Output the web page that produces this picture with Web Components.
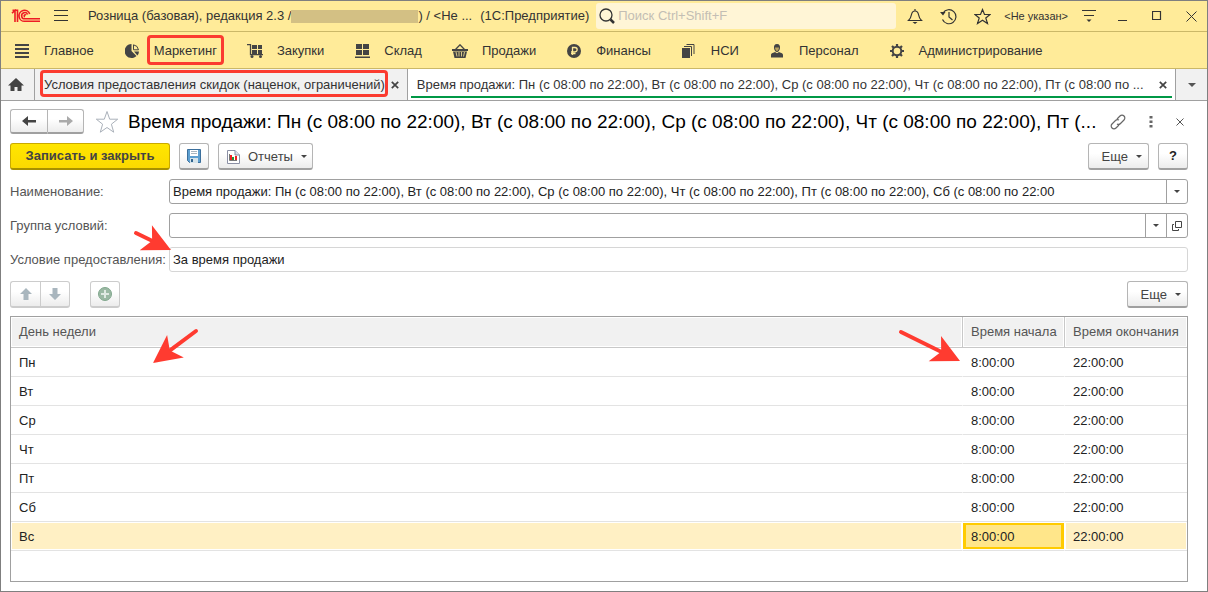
<!DOCTYPE html>
<html lang="ru">
<head>
<meta charset="utf-8">
<title>Розница (базовая), редакция 2.3</title>
<style>
  body {
    margin: 0;
    font: 13px/16px "Liberation Sans", Arial, sans-serif;
    color: #333;
  }
</style>
</head>
<body>
<app-window>
  <title-bar></title-bar>
  <section-nav>
    <nav-item icon="menu">Главное</nav-item>
    <nav-item icon="pie" marked>Маркетинг</nav-item>
    <nav-item icon="cart">Закупки</nav-item>
    <nav-item icon="stock">Склад</nav-item>
    <nav-item icon="basket">Продажи</nav-item>
    <nav-item icon="ruble">Финансы</nav-item>
    <nav-item icon="docs">НСИ</nav-item>
    <nav-item icon="person">Персонал</nav-item>
    <nav-item icon="gear">Администрирование</nav-item>
  </section-nav>
  <tab-strip>
    <tab-item marked>Условия предоставления скидок (наценок, ограничений)</tab-item>
    <tab-item active>Время продажи: Пн (с 08:00 по 22:00), Вт (с 08:00 по 22:00), Ср (с 08:00 по 22:00), Чт (с 08:00 по 22:00), Пт (с 08:00 по ...</tab-item>
  </tab-strip>
  <form-page>
    <form-header>Время продажи: Пн (с 08:00 по 22:00), Вт (с 08:00 по 22:00), Ср (с 08:00 по 22:00), Чт (с 08:00 по 22:00), Пт (...</form-header>
    <command-bar>
      <ui-button primary>Записать и закрыть</ui-button>
      <ui-button icon="save" label="Записать"></ui-button>
      <ui-button icon="report" menu>Отчеты</ui-button>
      <ui-button slot="end" wide menu>Еще</ui-button>
      <ui-button slot="end" help>?</ui-button>
    </command-bar>
    <form-field label="Наименование:" value="Время продажи: Пн (с 08:00 по 22:00), Вт (с 08:00 по 22:00), Ср (с 08:00 по 22:00), Чт (с 08:00 по 22:00), Пт (с 08:00 по 22:00), Сб (с 08:00 по 22:00" buttons="caret"></form-field>
    <form-field label="Группа условий:" value="" buttons="caret open"></form-field>
    <form-field label="Условие предоставления:" value="За время продажи" readonly>
      <red-arrow style="left: 122px; top: -18px" width="40" height="24" from="4 4" to="39 21"></red-arrow>
    </form-field>
    <command-bar>
      <button-pair icons="up down" labels="Вверх,Вниз" disabled></button-pair>
      <ui-button icon="plus" label="Добавить" disabled></ui-button>
      <ui-button slot="end" wide menu>Еще</ui-button>
    </command-bar>
    <schedule-table>
      <red-arrow style="left: 140px; top: 8px" width="50" height="42" from="45 6" to="2 38"></red-arrow>
      <red-arrow style="right: 226px; top: 10px" width="64" height="40" from="4 5" to="63 34"></red-arrow>
    </schedule-table>
  </form-page>
</app-window>

<script>
const ICONS = {
  logo: [30, 14, `<g fill="none" stroke="#ed1c24" stroke-width="1.6">
    <path d="M1 4.200 4 1.500V13M1.500 1.300H6.500V13"/>
    <path d="M18.700 5A5.500 5.500 0 1 0 14 12.300H29"/>
    <path d="M16.600 5.500A3.100 3.100 0 1 0 14 9.800H29"/>
    <path d="M15 6.200A1 1 0 1 0 14 7.800"/></g>`],
  burger: [16, 14, '<path d="M1 1.5h14M1 6.5h14M1 11.5h14" stroke="#333"/>'],
  search: [18, 18, '<circle cx="8" cy="8" r="6" fill="none" stroke="#333" stroke-width="1.3"/><path d="m12.5 12.5 3.5 3.5" stroke="#333" stroke-width="2.5"/>'],
  bell: [16, 17, '<path d="M1.500 12.500c2-2 2.500-3 3-6C5 4 6 3 8 3s3 1 3.500 3.500c.5 3 1 4 3 6ZM8 3V1" fill="none" stroke="#333" stroke-width="1.2"/><path d="M5.500 14h5L8 16Z" fill="#333"/>'],
  history: [17, 17, '<path d="M3 5A7 7 0 1 1 2.500 11.500" fill="none" stroke="#333" stroke-width="1.200"/><path d="M0 4h5.500L3 7.500Z" fill="#333"/><path d="M9 4v5l3.500 3" fill="none" stroke="#333" stroke-width="1.200"/>'],
  star: [17, 17, '<path d="m8.500 1.500 2 5h5.500l-4.200 3.500 1.700 5.500-5-3.200-5 3.200L5.200 10 1 6.500h5.500Z" fill="none" stroke="#333" stroke-width="1.200"/>'],
  bigstar: [24, 24, '<path d="m12 1.500 2.700 7.700h8l-6.300 5 2.300 8L12 17.500 5.300 22.200l2.300-8-6.300-5h8Z" fill="none" stroke="#aab1ba"/>'],
  filter: [14, 14, '<path d="M0 1.500h14M2 6.500h10" stroke="#333"/><path d="M4.500 10.500h5L7 13Z" fill="#333"/>'],
  min: [10, 10, '<path d="M0 9.500h9" stroke="#333"/>'],
  max: [10, 10, '<path d="M.5.5h8v8h-8Z" fill="none" stroke="#333" stroke-width="1.200"/>'],
  close: [11, 11, '<path d="m.5.5 10 10m0-10-10 10" stroke="#333"/>'],
  menu: [14, 14, '<path d="M0 1h14M0 5h14M0 9h14M0 13h14" stroke="#444" stroke-width="2"/>'],
  pie: [14, 14, '<path d="M6.500 0v7l5 5A7 7 0 1 1 6.500 0Z" fill="#444"/><path d="M8.500.8v5h5A6 6 0 0 0 8.500.8Z" fill="none" stroke="#444"/><path d="M9 7.500h5a7 7 0 0 1-1.600 4Z" fill="#444"/>'],
  cart: [16, 14, '<path d="M0 .7h3.500v10H16" fill="none" stroke="#444" stroke-width="1.300"/><path d="M5 1h5v4H5zM11 1h4v4h-4zM5 6h5v4H5zM11 6h4v4h-4z" fill="#444"/><circle cx="5" cy="12.500" r="1.500" fill="#444"/><circle cx="13.500" cy="12.500" r="1.500" fill="#444"/>'],
  stock: [15, 14, '<path d="M1 0h6v5H1zM8 0h6v5H8zM1 6h6v5H1zM8 6h6v5H8zM0 12.500h15V14H0z" fill="#444"/>'],
  basket: [16, 14, '<path d="M3.500 5.500 8 .8l4.500 4.700" fill="none" stroke="#444" stroke-width="1.300"/><path d="M0 5h16v2H0zM1 7.500h14L13.500 14h-11Z" fill="#444"/><path d="m4 8 1 4.500M7 8v4.500M9.500 8v4.500M12.500 8l-1 4.500" stroke="#ffeb99" stroke-width=".8"/>'],
  ruble: [14, 14, '<circle cx="7" cy="7" r="7" fill="#444"/><path d="M5.500 11V3.500H8a2 2 0 0 1 0 4.300H4M4 9.500h4.500" fill="none" stroke="#ffeb99" stroke-width="1.300"/>'],
  docs: [13, 14, '<path d="M0 4h8v10H0z" fill="#444"/><path d="M2 2.500h7.500V12M4.500.5H12V10" fill="none" stroke="#444"/>'],
  person: [14, 14, '<path d="M7 0C4.500 0 3.800 2 4 4s1.500 4 3 4 2.800-2 3-4-.5-4-3-4ZM1 13.500V11c0-2 3-2.500 4-3l2 1.200L9 8c1 .5 4 1 4 3v2.500Z" fill="#444"/><path d="M5 3.500h4C8.800 5.500 8 7 7 7S5.200 5.500 5 3.500Z" fill="#bba35d"/>'],
  gear: [16, 16, '<circle cx="8" cy="8" r="4.300" fill="none" stroke="#444" stroke-width="2"/><path d="M8 1v3M8 12v3M1 8h3M12 8h3M3 3l2 2M11 11l2 2M13 3l-2 2M5 11l-2 2" stroke="#444" stroke-width="2.200"/>'],
  home: [16, 14, '<path d="M8 0 16 7.500h-2.500V13H9.500V9h-3v4H2.500V7.500H0L8 0Z" fill="#444"/>'],
  cross: [8, 8, '<path d="m.8.8 6.400 6.400m0-6.400L.8 7.200" stroke="#444" stroke-width="1.700"/>'],
  left: [14, 12, '<path d="M0 6 6 1v4h8v2.500H6V11Z" fill="#444"/>'],
  right: [14, 12, '<path d="M14 6 8 1v4H0v2.500h8V11Z" fill="#aaa"/>'],
  link: [16, 16, '<g fill="none" stroke="#666" stroke-width="1.200"><path d="m7 5 3-3a2.800 2.800 0 0 1 4 4l-3.500 3.500a2.800 2.800 0 0 1-3.500.5"/><path d="m9 11-3 3a2.800 2.800 0 0 1-4-4l3.500-3.500A2.800 2.800 0 0 1 9 6"/></g>'],
  dots: [4, 12, '<path d="M.5 0h3v2.500h-3zM.5 4.500h3V7h-3zM.5 9h3v2.500h-3z" fill="#666"/>'],
  thincross: [8, 8, '<path d="m.5.5 7 7m0-7-7 7" stroke="#555"/>'],
  save: [14, 14, '<path d="M.5.5h13v13h-11l-2-2Z" fill="#5d9fd0" stroke="#3b6f9c"/><path d="M3 1h8v6H3z" fill="#fff"/><path d="M4 2.500h6M4 4.500h6" stroke="#a9b6c0"/><path d="M3 9h8v5H3z" fill="#d5e3ea"/><path d="M4 10h2v3H4z" fill="#31648f"/>'],
  report: [13, 14, '<path d="M.5.5H8L12.500 5v8.500H.5Z" fill="#fff" stroke="#8b90a5"/><path d="M8 .5V5h4.500" fill="#dde" stroke="#8b90a5"/><path d="M2.500 4v6.500H10" stroke="#777" fill="none"/><path d="M3 5h2v5H3z" fill="#e22"/><path d="M5 7h2v3H5z" fill="#1a9a3a"/><path d="M8 6h2v4H8z" fill="#e22"/>'],
  caret: [6, 3, '<path d="M0 0h6L3 3Z" fill="#444"/>'],
  bigcaret: [8, 4, '<path d="M0 0h8L4 4Z" fill="#555"/>'],
  open: [10, 10, '<path d="M3.500.5h6v6h-6ZM2 3.500H.5v6h6V8" fill="none" stroke="#444"/>'],
  up: [12, 12, '<path d="M6 0 12 6H8.500v6h-5V6H0Z" fill="#a9b6be"/>'],
  down: [12, 12, '<path d="M6 12 0 6h3.500V0h5v6H12Z" fill="#a9b6be"/>'],
  plus: [14, 14, '<circle cx="7" cy="7" r="6.500" fill="#9bb9a4" stroke="#81a78d"/><path d="M7 3v8M3 7h8" stroke="#dfe9e2" stroke-width="2"/>']
};

function icon(name) {
  const [w, h, body] = ICONS[name];
  return `<svg width="${w}" height="${h}" viewBox="0 0 ${w} ${h}" aria-hidden="true">${body}</svg>`;
}

const RESET = `
  * { box-sizing: border-box; }
  svg { display: block; flex: none; }
  button {
    font: inherit;
    color: inherit;
    margin: 0;
    padding: 0;
    border: 0;
    background: none;
    display: flex;
    align-items: center;
    justify-content: center;
  }
  .raised {
    height: 27px;
    border: 1px solid #b5b5b5;
    border-bottom: 2px solid #a0a0a0;
    border-radius: 3px;
    background: linear-gradient(#fff 40%, #ececec);
  }
  .raised:disabled { border-color: #ccc; color: #888; }
`;

class BaseElement extends HTMLElement {
  constructor() {
    super();
    this.attachShadow({ mode: 'open' });
  }

  connectedCallback() {
    this.shadowRoot.innerHTML = `<style>${RESET}</style>${this.render()}`;
  }
}

class AppWindow extends BaseElement {
  render() {
    return `
      <style>
        :host {
          display: flex;
          flex-direction: column;
          box-sizing: border-box;
          min-height: 100vh;
          border: 1px solid #7f7f7f;
          background: #fff;
        }
      </style>
      <slot></slot>
    `;
  }
}

class TitleBar extends BaseElement {
  render() {
    return `
      <style>
        :host {
          display: flex;
          align-items: center;
          height: 31px;
          box-sizing: border-box;
          padding: 0 10px;
          background: #ffeb99;
          border-bottom: 1px solid #cbb868;
          white-space: pre;
        }
        .burger { margin: 0 19px 0 12px; }
        .hidden-part {
          width: 127px;
          height: 13px;
          background: #d3c084;
        }
        .product { flex: 1; margin-left: 8px; }
        .search {
          display: flex;
          align-items: center;
          width: 300px;
          height: 26px;
          padding: 0 2px;
          border-radius: 3px;
          background: #fff5d6;
        }
        input {
          flex: 1;
          min-width: 0;
          border: 0;
          padding: 0 2px;
          background: none;
          font: inherit;
        }
        input::placeholder { color: #c3beb4; opacity: 1; }
        .tools {
          display: flex;
          align-items: center;
          gap: 17px;
          margin-left: 11px;
        }
        .user { font-size: 11px; margin: 0 -3px 0 -4px; }
        .frame {
          display: flex;
          align-items: center;
          gap: 24px;
          margin-left: 22px;
        }
      </style>
      ${icon('logo')}
      <button class="burger" aria-label="Меню">${icon('burger')}</button>
      <span>Розница (базовая), редакция 2.3 /</span>
      <span class="hidden-part"></span>
      <span>) / &lt;Не ...</span>
      <span class="product">(1С:Предприятие)</span>
      <label class="search">${icon('search')}<input type="text" placeholder="Поиск Ctrl+Shift+F" aria-label="Поиск"></label>
      <div class="tools">
        <button aria-label="Оповещения">${icon('bell')}</button>
        <button aria-label="История">${icon('history')}</button>
        <button aria-label="Избранное">${icon('star')}</button>
        <button class="user">&lt;Не указан&gt;</button>
        <button aria-label="Настройки">${icon('filter')}</button>
      </div>
      <div class="frame">
        <button aria-label="Свернуть">${icon('min')}</button>
        <button aria-label="Развернуть">${icon('max')}</button>
        <button aria-label="Закрыть">${icon('close')}</button>
      </div>
    `.replace(/>\s+</g, '><');
  }
}

class SectionNav extends BaseElement {
  render() {
    return `
      <style>
        :host {
          display: flex;
          align-items: center;
          gap: 31px;
          height: 37px;
          box-sizing: border-box;
          padding: 1px 14px 0;
          background: #ffeb99;
          border-bottom: 1px solid #cbb868;
        }
      </style>
      <slot></slot>
    `;
  }
}

class NavItem extends BaseElement {
  render() {
    return `
      <style>
        :host { display: block; }
        a {
          display: flex;
          align-items: center;
          gap: 15px;
          color: inherit;
          text-decoration: none;
        }
        .icon {
          display: flex;
          justify-content: center;
          width: 14px;
        }
        .label { position: relative; white-space: nowrap; }
        :host([marked]) .label::after {
          content: "";
          position: absolute;
          inset: -8px -7px -6px;
          border: 3px solid #fb3b30;
          border-radius: 4px;
        }
      </style>
      <a href="#">
        <span class="icon">${icon(this.getAttribute('icon'))}</span>
        <span class="label"><slot></slot></span>
      </a>
    `;
  }
}

class TabStrip extends BaseElement {
  render() {
    return `
      <style>
        :host {
          display: flex;
          height: 32px;
          box-sizing: border-box;
          background: #f1f1f1;
          border-bottom: 1px solid #a0a0a0;
        }
        .home { width: 34px; padding-right: 4px; border-right: 1px solid #a0a0a0; }
        .list { width: 31px; }
      </style>
      <button class="home" aria-label="Начальная страница">${icon('home')}</button>
      <slot></slot>
      <button class="list" aria-label="Список вкладок">${icon('bigcaret')}</button>
    `;
  }
}

class TabItem extends BaseElement {
  render() {
    return `
      <style>
        :host {
          display: flex;
          align-items: center;
          gap: 6px;
          flex: none;
          position: relative;
          box-sizing: border-box;
          padding: 0 8px 0 9px;
          border-right: 1px solid #a0a0a0;
          white-space: nowrap;
        }
        :host([active]) {
          flex: 1;
          min-width: 0;
          background: #fff;
        }
        :host([active])::after {
          content: "";
          position: absolute;
          left: 3px;
          right: 3px;
          bottom: 2px;
          height: 2px;
          background: #009846;
        }
        .label { flex: 1; min-width: 0; position: relative; }
        :host([marked]) .label::after {
          content: "";
          position: absolute;
          inset: -7px -3px -4px -4px;
          border: 3px solid #fb3b30;
          border-radius: 4px;
        }
      </style>
      <span class="label"><slot></slot></span>
      <button aria-label="Закрыть вкладку">${icon('cross')}</button>
    `;
  }
}

class FormPage extends BaseElement {
  render() {
    return `
      <style>
        :host {
          display: flex;
          flex-direction: column;
          gap: 9px;
          flex: 1;
          padding: 8px 19px 9px 9px;
        }
      </style>
      <slot></slot>
    `;
  }
}

class ButtonPair extends BaseElement {
  render() {
    const labels = this.getAttribute('labels').split(',');
    const buttons = this.getAttribute('icons').split(' ').map((name, i) => `
      <button class="raised" aria-label="${labels[i]}" ${this.hasAttribute('disabled') ? 'disabled' : ''}>${icon(name)}</button>
    `);
    return `
      <style>
        :host { display: flex; margin-right: 11px; }
        button { width: 30px; }
        :host([large]) button { width: 37px; height: 25px; }
        button:first-of-type { border-radius: 3px 0 0 3px; border-right-width: 0; }
        button:last-of-type { border-radius: 0 3px 3px 0; }
      </style>
      ${buttons.join('')}
    `;
  }
}

class FormHeader extends BaseElement {
  render() {
    return `
      <style>
        :host {
          display: flex;
          align-items: center;
          height: 25px;
          padding-right: 4px;
        }
        h1 {
          flex: 1;
          min-width: 0;
          margin: 0 0 0 9px;
          font-size: 19px;
          font-weight: normal;
          line-height: 24px;
          color: #000;
          white-space: nowrap;
        }
        .tools {
          display: flex;
          align-items: center;
          gap: 23px;
        }
      </style>
      <button-pair icons="left right" labels="Назад,Вперед" large></button-pair>
      <button aria-label="В избранное">${icon('bigstar')}</button>
      <h1><slot></slot></h1>
      <div class="tools">
        <button aria-label="Ссылка">${icon('link')}</button>
        <button aria-label="Еще">${icon('dots')}</button>
        <button aria-label="Закрыть">${icon('thincross')}</button>
      </div>
    `;
  }
}

class CommandBar extends BaseElement {
  render() {
    return `
      <style>
        :host { display: flex; gap: 9px; }
        .space { flex: 1; }
      </style>
      <slot></slot>
      <span class="space"></span>
      <slot name="end"></slot>
    `;
  }
}

class UiButton extends BaseElement {
  render() {
    const name = this.getAttribute('icon');
    const label = this.getAttribute('label');
    return `
      <style>
        :host { display: block; }
        button {
          gap: 8px;
          min-width: 30px;
          color: #444;
        }
        :host([menu]) button { padding: 1px 5px 0 8px; }
        :host([wide]) button { padding-left: 13px; padding-right: 6px; }
        :host([primary]) button {
          width: 160px;
          font-weight: bold;
          border-color: #c9a900 #c9a900 #a89000;
          background: linear-gradient(#ffe600, #fbd900);
        }
        :host([help]) button { font-weight: bold; color: #222; }
      </style>
      <button class="raised" ${label ? `aria-label="${label}"` : ''} ${this.hasAttribute('disabled') ? 'disabled' : ''}>
        ${name ? icon(name) : ''}<slot></slot>${this.hasAttribute('menu') ? icon('caret') : ''}
      </button>
    `;
  }
}

class FormField extends BaseElement {
  render() {
    const names = (this.getAttribute('buttons') || '').split(' ').filter(Boolean);
    const titles = { caret: 'Выбрать', open: 'Открыть' };
    return `
      <style>
        :host {
          display: flex;
          align-items: center;
          position: relative;
        }
        label {
          flex: none;
          width: 159px;
          color: #555;
          white-space: nowrap;
        }
        .box {
          display: flex;
          flex: 1;
          height: 25px;
          border: 1px solid #a0a0a0;
          border-radius: 3px;
          background: #fff;
        }
        :host([readonly]) .box { border-color: #d6d6d6; }
        input {
          flex: 1;
          min-width: 0;
          border: 0;
          padding: 0 3px;
          background: none;
          font: inherit;
          color: #222;
        }
        .box button { width: 21px; border-left: 1px solid #a0a0a0; }
      </style>
      <label for="value">${this.getAttribute('label')}</label>
      <div class="box">
        <input id="value" type="text" value="${this.getAttribute('value')}" ${this.hasAttribute('readonly') ? 'readonly' : ''}>
        ${names.map(n => `<button aria-label="${titles[n]}">${icon(n)}</button>`).join('')}
      </div>
      <slot></slot>
    `;
  }
}

class ScheduleTable extends BaseElement {
  render() {
    const days = ['Пн', 'Вт', 'Ср', 'Чт', 'Пт', 'Сб', 'Вс'];
    const rows = days.map((day, i) => {
      const current = i === days.length - 1;
      return `
        <tr ${current ? 'class="current"' : ''}>
          <td>${day}</td>
          <td ${current ? 'class="cell"' : ''}>8:00:00</td>
          <td>22:00:00</td>
        </tr>
      `;
    });
    return `
      <style>
        :host {
          display: block;
          flex: 1;
          position: relative;
          box-sizing: border-box;
          margin-top: -1px;
          border: 1px solid #a0a0a0;
        }
        table {
          width: 100%;
          table-layout: fixed;
          border-collapse: separate;
          border-spacing: 0;
        }
        th, td {
          height: 29px;
          padding: 0 8px;
          text-align: left;
          font-weight: normal;
          white-space: nowrap;
          border-bottom: 1px solid #e3e3e3;
        }
        th {
          height: 31px;
          color: #555;
          background: #f1f1f1;
          border-bottom-color: #c8c8c8;
          box-shadow: inset 0 0 0 1px #fff;
        }
        th + th { border-left: 1px solid #c8c8c8; }
        td + td { border-left: 1px solid #fff; }
        th:nth-child(2) { width: 102px; }
        th:nth-child(3) { width: 123px; }
        td { padding-top: 2px; color: #222; }
        .current td { background: #fff0c4; box-shadow: inset 0 0 0 1px #fff; }
        .current .cell {
          background: #ffe68a;
          box-shadow: inset 0 1px #fff, inset 0 -1px #fff, inset 0 0 0 3px #ffcb00;
        }
      </style>
      <table>
        <thead>
          <tr><th>День недели</th><th>Время начала</th><th>Время окончания</th></tr>
        </thead>
        <tbody>${rows.join('')}</tbody>
      </table>
      <slot></slot>
    `;
  }
}

// straight arrow laid over the form, from/to are points inside its own box
class RedArrow extends BaseElement {
  render() {
    const w = this.getAttribute('width');
    const h = this.getAttribute('height');
    const [x1, y1] = this.getAttribute('from').split(' ').map(Number);
    const [x2, y2] = this.getAttribute('to').split(' ').map(Number);
    const len = Math.hypot(x2 - x1, y2 - y1);
    const ux = (x2 - x1) / len;
    const uy = (y2 - y1) / len;
    const at = (back, side) => `${x2 - ux * back - uy * side} ${y2 - uy * back + ux * side}`;
    return `
      <style>
        :host { position: absolute; pointer-events: none; }
        svg { overflow: visible; }
      </style>
      <svg width="${w}" height="${h}" viewBox="0 0 ${w} ${h}" aria-hidden="true">
        <path d="M${x1} ${y1}L${at(20, 0)}" stroke="#ff3b30" stroke-width="4" stroke-linecap="round"/>
        <path d="M${at(0, 0)}L${at(28, 14)}L${at(21, 0)}L${at(28, -14)}Z" fill="#ff3b30"/>
      </svg>
    `;
  }
}

customElements.define('app-window', AppWindow);
customElements.define('title-bar', TitleBar);
customElements.define('section-nav', SectionNav);
customElements.define('nav-item', NavItem);
customElements.define('tab-strip', TabStrip);
customElements.define('tab-item', TabItem);
customElements.define('form-page', FormPage);
customElements.define('button-pair', ButtonPair);
customElements.define('form-header', FormHeader);
customElements.define('command-bar', CommandBar);
customElements.define('ui-button', UiButton);
customElements.define('form-field', FormField);
customElements.define('schedule-table', ScheduleTable);
customElements.define('red-arrow', RedArrow);
</script>
</body>
</html>
